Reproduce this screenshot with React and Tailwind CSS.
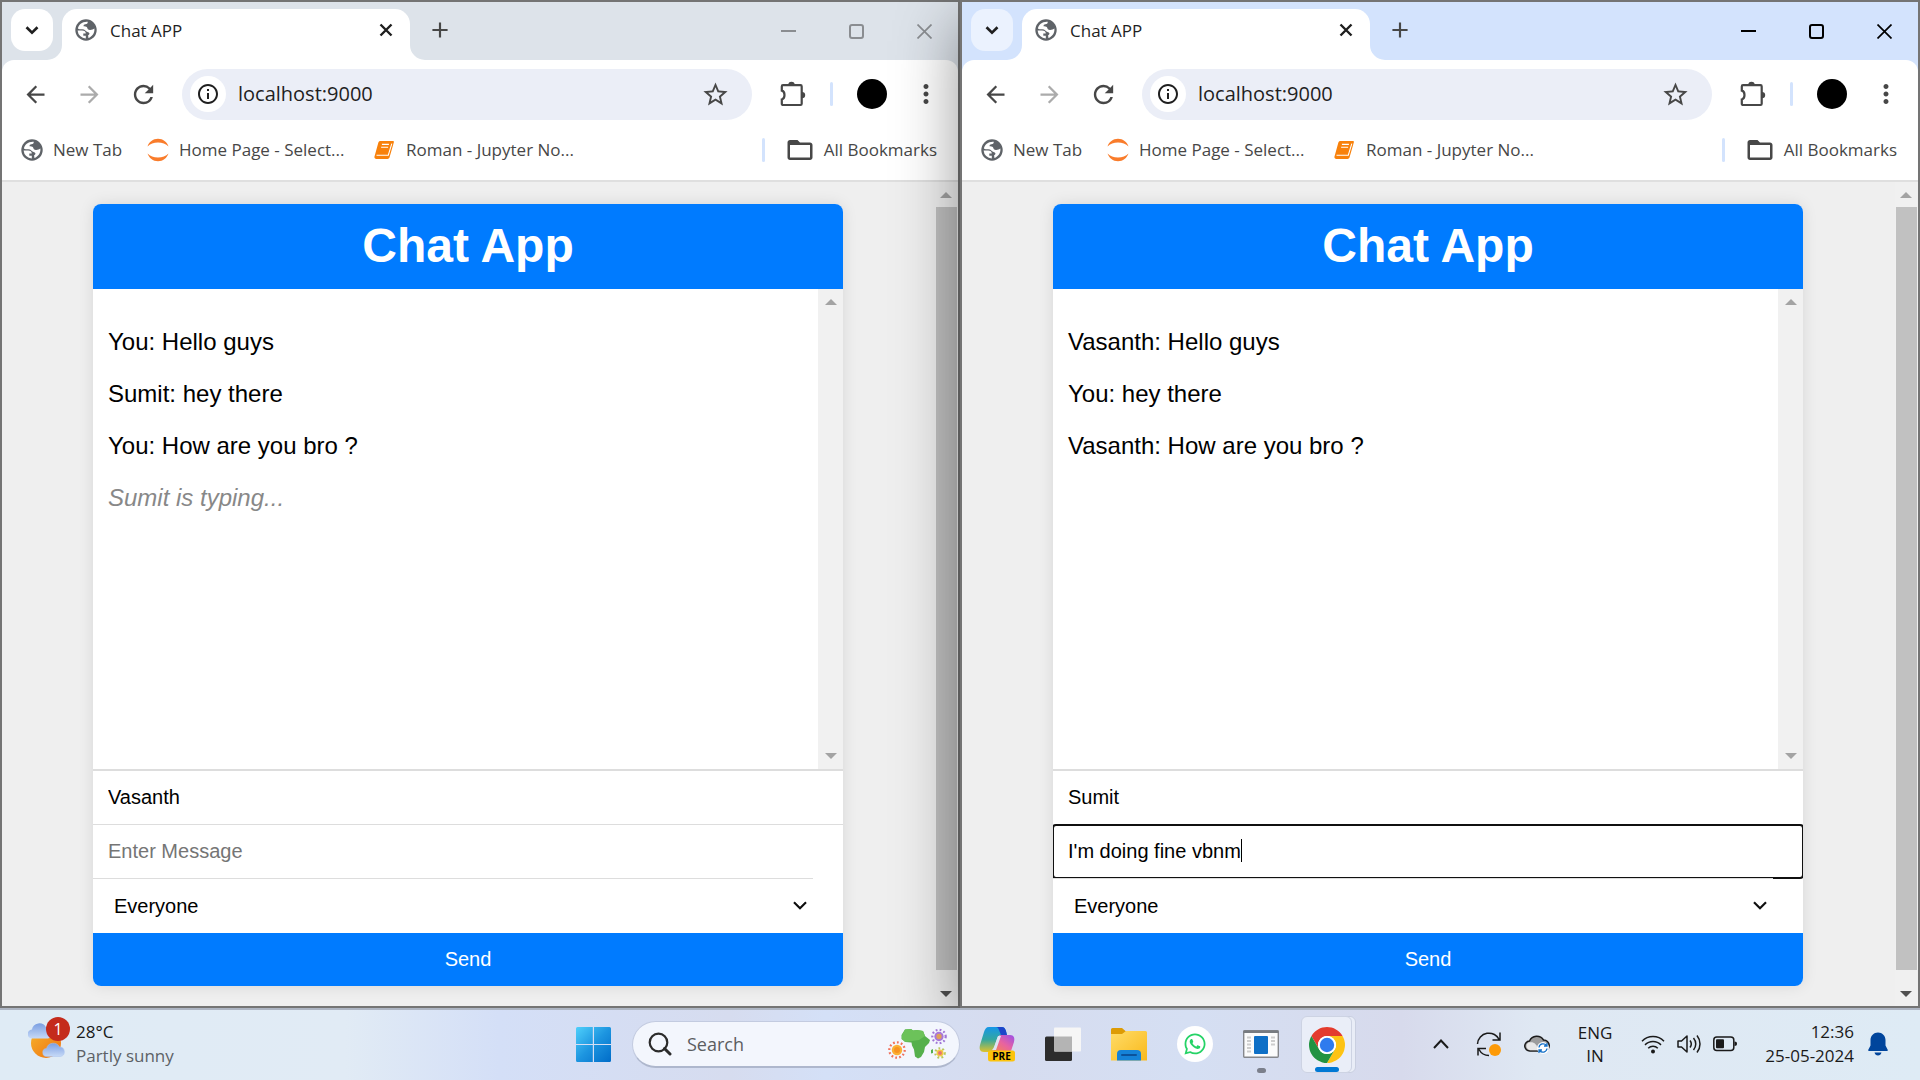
import React from "react";
import {
  MdArrowBack,
  MdArrowForward,
  MdRefresh,
  MdInfoOutline,
  MdStarBorder,
  MdMoreVert,
  MdAdd,
  MdFolderOpen,
} from "react-icons/md";
import { FaWhatsapp } from "react-icons/fa";

const UI_FONT = "font-['Open_Sans','Noto_Sans',sans-serif]";
const PAGE_FONT = "font-['Liberation_Sans',Arial,sans-serif]";

function Globe() {
  return (
    <svg viewBox="0 0 22 22" className="size-[22px] shrink-0" aria-hidden="true">
      <circle cx="11" cy="11" r="10.7" fill="#5f6368" />
      <path d="M2.600 11.500H7c2.500 0 3.800 1 3.800 3H8.300v2.200h2.500v2.700a8.500 8.500 0 0 1-8.200-7.900Z" fill="#fff" />
      <path d="M12.800 2.700c-.1 1.800-1 2.500-2.400 2.500-1.300 0-1.900.8-1.900 2.100 2.200-.2 3.500.5 3.900 1.900.4 1.300 1.200 1.800 2.800 1.700 1.700 0 3.200-.4 4.200-1.300.4 4.500-2.200 8.200-6 9.500l-.3-2.900c1.600-.4 2-2.300 0-2.900-2.400-.8-3.100-3.100-5.900-3.100-1.700 0-3.200-.2-4.300-.8C3.500 5.500 7.500 2.200 12.800 2.700Z" fill="#fff" />
    </svg>
  );
}

function Jupyter() {
  return (
    <svg viewBox="0 0 24 24" className="size-6 shrink-0" aria-hidden="true">
      <path d="M1.500 8.500C3 4 7 .8 12 .8s9 3.200 10.500 7.700C20 5.600 16.200 4.500 12 4.500S4 5.600 1.500 8.500Z" fill="#f97c2b" />
      <path d="M1.500 15.500C3 20 7 23.200 12 23.200s9-3.200 10.500-7.700c-2.500 2.900-6.300 4-10.500 4s-8-1.100-10.500-4Z" fill="#f97c2b" />
    </svg>
  );
}

function Book() {
  return (
    <svg viewBox="0 0 20 20" className="size-5 shrink-0" aria-hidden="true">
      <path d="M6.500 1h12.300c1 0 1.300.7 1 1.600l-4.300 15c-.3.900-1 1.400-2 1.400H2.300C.8 19 .1 17.700.5 16.400L4.300 2.700C4.600 1.600 5.400 1 6.500 1Z" fill="#f8810b" />
      <path d="M7.900 4.400h7M7.100 7.200h7M2.500 15.200h11.800l3.500-11.500" fill="none" stroke="#fff" strokeWidth="1.100" />
    </svg>
  );
}

function Puzzle() {
  return (
    <svg viewBox="0 0 26 26" className="size-[26px]" aria-hidden="true">
      <path d="M3 4.200h17.500a1.200 1.200 0 0 1 1.200 1.200v17.400a1.200 1.200 0 0 1-1.200 1.200H3a1.200 1.200 0 0 1-1.200-1.200v-4.300c3.600-.8 3.600-8.100 0-8.800V5.400A1.200 1.200 0 0 1 3 4.200Z" fill="none" stroke="#474747" strokeWidth="2.200" />
      <path d="M8.300 4a3.200 3.200 0 0 1 6.400 0ZM22 10.900a3.200 3.200 0 0 1 0 6.400Z" fill="#474747" />
    </svg>
  );
}

function TabFoot({ flip }) {
  return (
    <svg viewBox="0 0 15 15" className={flip ? "size-[15px] -scale-x-100 self-end" : "size-[15px] self-end"} aria-hidden="true">
      <path d="M0 15A15 15 0 0 0 15 0V15Z" fill="#fff" />
    </svg>
  );
}

function Triangle({ down, dark }) {
  return (
    <svg
      viewBox="0 0 12 6"
      className={(down ? "rotate-180 " : "") + "h-1.5 w-3 " + (dark ? "text-[#505050]" : "text-[#a3a3a3]")}
      aria-hidden="true"
    >
      <path d="M6 0 12 6H0Z" fill="currentColor" />
    </svg>
  );
}

function TabStrip({ active }) {
  return (
    <div className={"flex h-[58px] pl-[9px] pt-[7px] " + (active ? "bg-[#d3e3fd]" : "bg-[#dde3ea]")}>
      <button
        type="button"
        aria-label="Search tabs"
        className={"flex size-[42px] shrink-0 items-center justify-center rounded-[14px] " + (active ? "bg-[#ebf2fe]" : "bg-white")}
      >
        <svg viewBox="0 0 14 9" className="h-[9px] w-[14px]" aria-hidden="true">
          <path d="m1.500 1.300 5.500 5.400 5.500-5.400" fill="none" stroke="#1f1f1f" strokeWidth="2.600" />
        </svg>
      </button>
      <div className="-ml-1.5 flex">
        <TabFoot />
        <div className="flex w-[348px] items-start rounded-t-[15px] bg-white pl-[13px] pr-[17px]">
          <div className="flex h-[42px] flex-1 items-center gap-[13px]">
            <Globe />
            <span className="pt-0.5 text-[17px] leading-6 text-[#1f1f1f]">Chat APP</span>
            <button type="button" aria-label="Close tab" className="ml-auto">
              <svg viewBox="0 0 14 14" className="size-3.5" aria-hidden="true">
                <path d="m1.500 1.500 11 11m0-11-11 11" stroke="#1f1f1f" strokeWidth="2.400" />
              </svg>
            </button>
          </div>
        </div>
        <TabFoot flip />
      </div>
      <button type="button" aria-label="New tab" className="-ml-1.5 flex size-[42px] items-center justify-center text-[#474747]">
        <MdAdd size={26} />
      </button>
      <div className={"-mt-[7px] ml-auto flex items-stretch " + (active ? "text-black" : "text-[#8a8d91]")}>
        <button type="button" aria-label="Minimize" className="flex w-[68px] items-center justify-center">
          <span className="h-0.5 w-[15px] bg-current" />
        </button>
        <button type="button" aria-label="Maximize" className="flex w-[68px] items-center justify-center">
          <span className="size-[15px] rounded-[3px] border-2 border-current" />
        </button>
        <button type="button" aria-label="Close window" className="flex w-[68px] items-center justify-center">
          <svg viewBox="0 0 15 15" className="size-[15px]" aria-hidden="true">
            <path d="m.5.5 14 14m0-14-14 14" stroke="currentColor" strokeWidth="1.700" />
          </svg>
        </button>
      </div>
    </div>
  );
}

function Toolbar() {
  return (
    <div className="flex h-[68px] items-center rounded-t-xl bg-white text-[#474747]">
      <div className="flex w-[180px] shrink-0 items-center pl-1.5">
        <button type="button" aria-label="Back" className="flex w-[54px] justify-center">
          <MdArrowBack size={27} />
        </button>
        <button type="button" aria-label="Forward" className="flex w-[54px] justify-center text-[#ababab]">
          <MdArrowForward size={27} />
        </button>
        <button type="button" aria-label="Reload" className="flex w-[54px] justify-center">
          <MdRefresh size={29} />
        </button>
      </div>
      <div className="flex h-[51px] min-w-0 flex-1 items-center rounded-full bg-[#ebeef7] pl-2 pr-[22px]">
        <button type="button" aria-label="View site information" className="flex size-9 shrink-0 items-center justify-center rounded-full bg-white text-[#1f1f1f]">
          <MdInfoOutline size={24} />
        </button>
        <input aria-label="Address" defaultValue="localhost:9000" className="ml-3 min-w-0 flex-1 bg-transparent text-xl leading-7 text-[#1f1f1f] outline-none" />
        <button type="button" aria-label="Bookmark this tab">
          <MdStarBorder size={29} />
        </button>
      </div>
      <button type="button" aria-label="Extensions" className="ml-7">
        <Puzzle />
      </button>
      <span className="ml-6 h-6 w-[3px] rounded-full bg-[#d3e3fd]" />
      <button type="button" aria-label="Profile" className="ml-6 size-[30px] rounded-full bg-black" />
      <button type="button" aria-label="Menu" className="ml-6 mr-[17px]">
        <MdMoreVert size={30} />
      </button>
    </div>
  );
}

function BookmarksBar() {
  return (
    <nav aria-label="Bookmarks" className="flex h-[54px] items-center whitespace-nowrap border-b-2 border-[#dfdfdf] bg-white pb-2 pl-[19px] pr-[21px] text-[17px] leading-6 text-[#474747]">
      <a href="#new" className="flex w-[125px] items-center gap-2.5">
        <Globe />
        New Tab
      </a>
      <a href="#home" className="flex w-[228px] items-center gap-[9px]">
        <Jupyter />
        Home Page - Select...
      </a>
      <a href="#roman" className="flex items-center gap-3">
        <Book />
        Roman - Jupyter No...
      </a>
      <span className="ml-auto h-6 w-[3px] rounded-full bg-[#d3e3fd]" />
      <button type="button" className="ml-5 flex items-center gap-[9px]">
        <MdFolderOpen size={30} />
        All Bookmarks
      </button>
    </nav>
  );
}

function ChatCard({ name, message, lines, typing }) {
  return (
    <main className="mb-5 mt-[22px] flex w-full max-w-[750px] flex-col overflow-hidden rounded-lg bg-white text-xl leading-6 text-black shadow-[0_0_15px_rgba(0,0,0,0.1)]">
      <h1 className="bg-[#007bff] pb-4 pt-3.5 text-center text-5xl font-bold leading-[55px] text-white">Chat App</h1>
      <div className="flex min-h-0 flex-1 border-b-2 border-[#ddd]">
        <div className="flex-1 space-y-6 px-[15px] pt-[39px] text-2xl leading-7">
          {lines.map((line) => (
            <p key={line}>{line}</p>
          ))}
          {typing && <p className="italic text-[#888]">{typing}</p>}
        </div>
        <div className="flex w-[25px] flex-col items-center justify-between bg-[#f1f1f1] py-2.5">
          <Triangle />
          <Triangle down />
        </div>
      </div>
      <form className="flex flex-col" onSubmit={(e) => e.preventDefault()}>
        <input aria-label="Name" defaultValue={name} className="h-[54px] border-b border-[#ddd] px-[15px] outline-none" />
        <div className="relative flex h-[53px]">
          <input
            aria-label="Message"
            defaultValue={message}
            placeholder="Enter Message"
            className={
              "w-full px-[15px] pb-0.5 placeholder:text-[#757575] " +
              (message ? "rounded-[3px] outline-2 -outline-offset-1 outline-[#101010]" : "outline-none")
            }
          />
          {message && <span className="absolute left-[188px] top-3.5 h-[23px] w-px bg-black" />}
        </div>
        <div className="relative mr-[30px]">
          <select aria-label="Recipient" className="block h-[55px] w-full appearance-none border-t border-[#ddd] bg-white pl-[21px] outline-none">
            <option>Everyone</option>
          </select>
          <svg viewBox="0 0 14 9" className="pointer-events-none absolute right-1.5 top-[23px] h-[9px] w-[14px]" aria-hidden="true">
            <path d="m1 1.200 6 6 6-6" fill="none" stroke="#101010" strokeWidth="2.200" />
          </svg>
        </div>
        <button type="submit" className="h-[53px] bg-[#007bff] pb-0.5 text-white">Send</button>
      </form>
    </main>
  );
}

function BrowserWindow({ active, chat }) {
  return (
    <section
      className={
        "flex min-w-0 flex-1 flex-col border-2 border-[#747474] " +
        (active ? "relative bg-[#d3e3fd] shadow-[0_20px_60px_rgba(0,0,0,0.42)]" : "bg-[#dde3ea]")
      }
    >
      <header className={UI_FONT}>
        <TabStrip active={active} />
        <Toolbar />
        <BookmarksBar />
      </header>
      <div className={"flex min-h-0 flex-1 bg-[#efefef] " + PAGE_FONT}>
        <div className="flex flex-1 justify-center pl-5 pr-[21px]">
          <ChatCard {...chat} />
        </div>
        <div className="flex w-[23px] flex-col items-center gap-[9px] bg-[#f0f0f0] pb-[9px] pr-px pt-2.5">
          <Triangle />
          <span className="w-[21px] flex-1 bg-[#c1c1c1]" />
          <span className="pt-3">
            <Triangle down dark />
          </span>
        </div>
      </div>
    </section>
  );
}

function Weather() {
  return (
    <svg viewBox="0 0 38 40" className="h-10 w-[38px]" aria-hidden="true">
      <defs>
        <linearGradient id="sun" x1="0" y1="0" x2="1" y2="1">
          <stop offset="0" stopColor="#f7b52c" />
          <stop offset="1" stopColor="#ee6f10" />
        </linearGradient>
        <linearGradient id="cloud" x1="0" y1="0" x2="0" y2="1">
          <stop offset="0" stopColor="#7b9fe2" />
          <stop offset="1" stopColor="#c6d9f7" />
        </linearGradient>
      </defs>
      <circle cx="18" cy="25" r="15" fill="url(#sun)" />
      <path d="M4.500 20.500a4.500 4.500 0 0 1-.6-9A7.500 7.500 0 0 1 18 9.500a5.500 5.500 0 0 1 2 11Z" fill="url(#cloud)" />
      <path d="M19 38.500a4 4 0 0 1-.5-8 7 7 0 0 1 13-1.500 4.800 4.800 0 0 1 1 9.500Z" fill="url(#cloud)" stroke="#a9c2ee" strokeWidth=".5" />
    </svg>
  );
}

function StartLogo() {
  return (
    <svg viewBox="0 0 35 35" className="size-[35px]" aria-hidden="true">
      <defs>
        <linearGradient id="start" gradientUnits="userSpaceOnUse" x1="0" y1="0" x2="35" y2="35">
          <stop offset="0" stopColor="#4fd0fb" />
          <stop offset=".5" stopColor="#1d95e0" />
          <stop offset="1" stopColor="#006cc8" />
        </linearGradient>
      </defs>
      <path d="M1.500 0H16.800V17H0V1.500A1.500 1.500 0 0 1 1.500 0ZM18 0h15.500A1.500 1.500 0 0 1 35 1.500V17H18ZM0 18h16.800v17H1.500A1.500 1.500 0 0 1 0 33.500ZM18 18h17v15.500a1.500 1.500 0 0 1-1.500 1.500H18Z" fill="url(#start)" />
    </svg>
  );
}

function Burst({ cx, cy, r, ring, core, heart }) {
  return (
    <g>
      <circle cx={cx} cy={cy} r={r - 1.3} fill="none" stroke={ring} strokeWidth="2.200" strokeDasharray="1.800 2.200" />
      <circle cx={cx} cy={cy} r={r * 0.58} fill={core} />
      <circle cx={cx} cy={cy} r={r * 0.33} fill={heart} />
    </g>
  );
}

function SearchArt() {
  return (
    <svg viewBox="0 0 60 32" className="h-8 w-[60px]" aria-hidden="true">
      <path d="M17 1.500 23 1l2 1.500 4-.5 6 1 2 5 5 4-1 3-4 4-1 5-3 5-3 1.500-3-2-1-7-2-4-.5-3-6-.5-4-3V7Z" fill="#55b04c" />
      <path d="M17 1.500 23 1l2 1.500 4-.5 6 1 2 5-6 4-14 2-3-3V7Z" fill="#6cc25a" />
      <path d="M43 22l2-1v4l-2 .5Z" fill="#55b04c" />
      <Burst cx={9} cy={22} r={9} ring="#f0705a" core="#fbb034" heart="#f79320" />
      <Burst cx={51} cy={8.500} r={8} ring="#a076d6" core="#a877d8" heart="#e0a25a" />
      <Burst cx={52} cy={25} r={6} ring="#b9c85a" core="#f5c842" heart="#e57373" />
    </svg>
  );
}

function Copilot() {
  return (
    <svg viewBox="0 0 36 36" className="size-9" aria-hidden="true">
      <defs>
        <linearGradient id="cpa" x1="0" y1="0" x2="0" y2="1">
          <stop offset="0" stopColor="#1596e8" />
          <stop offset=".5" stopColor="#33a7a0" />
          <stop offset="1" stopColor="#e0c32c" />
        </linearGradient>
        <linearGradient id="cpb" x1="1" y1="0" x2="0" y2="1">
          <stop offset="0" stopColor="#9a4fe8" />
          <stop offset=".5" stopColor="#e863a0" />
          <stop offset="1" stopColor="#f7884a" />
        </linearGradient>
      </defs>
      <path d="M10 1h13c3 0 4 3 5 8h-6c-2 0-3 1-4 4l-3 9c-1 3-2 4-5 4H5c-4 0-5-3-4-7l4-13c1-3 2-5 5-5Z" fill="url(#cpa)" />
      <path d="M17 1h6c3 0 4 3 5 8h-6l-2-5c-.6-2-1.500-3-3-3Z" fill="#1d45c9" />
      <path d="M22 9h9c4 0 5 3 4 7l-3 9H12c2 0 3-1 4-4l3-9c.6-2 1.500-3 3-3Z" fill="url(#cpb)" />
      <path d="M19 10h3l-5 14h-4c1-1 1.500-2 2-3Z" fill="#dfe3f3" />
      <rect x="9" y="24.500" width="27" height="11" rx="2.500" fill="#fcc30b" />
      <text x="22.500" y="33.500" textAnchor="middle" fontFamily="Open Sans, sans-serif" fontWeight="700" fontSize="10" fill="#000">PRE</text>
    </svg>
  );
}

function TaskView() {
  return (
    <svg viewBox="0 0 36 36" className="size-9" aria-hidden="true">
      <rect x="0" y="10.500" width="27" height="24.500" rx="1.500" fill="#2d2d2d" />
      <rect x="9" y="1.500" width="27" height="24" rx="1" fill="#f6f6f6" />
      <path d="M9 10.500h18v15H10a1 1 0 0 1-1-1Z" fill="#b4b4b4" />
    </svg>
  );
}

function Folder() {
  return (
    <svg viewBox="0 0 36 36" className="size-9" aria-hidden="true">
      <defs>
        <linearGradient id="fold" x1="0" y1="0" x2="1" y2="1">
          <stop offset="0" stopColor="#ffdc69" />
          <stop offset="1" stopColor="#f9b91a" />
        </linearGradient>
      </defs>
      <path d="M0 3.500A1.500 1.500 0 0 1 1.500 2H11l4 3.500V12H0Z" fill="#dd9b05" />
      <path d="M0 8h11l4-3h19.500A1.500 1.500 0 0 1 36 6.500V34.500H0Z" fill="url(#fold)" />
      <path d="M6 34.500V28a4 4 0 0 1 4-4h16a4 4 0 0 1 4 4v6.500Z" fill="#1583d8" />
      <rect x="10" y="28" width="16" height="2" rx="1" fill="#0b529b" />
    </svg>
  );
}

function PreviewApp() {
  return (
    <svg viewBox="0 0 36 36" className="size-9" aria-hidden="true">
      <rect x=".7" y="4.700" width="34.600" height="26.600" rx="1" fill="#fbfbfb" stroke="#85878c" strokeWidth="1.400" />
      <path d="M.5 4.500h35V7H.5Z" fill="#777b80" />
      <rect x="11" y="10" width="14" height="18" rx="1" fill="#0e6fc6" />
      <path d="M4 11.500h4M4 15h4M4 18.500h4M4 22h4M4 25.500h4M28 11.500h4M28 15h4M28 18.500h4" stroke="#cdcdcd" strokeWidth="1.800" />
    </svg>
  );
}

function Chrome() {
  return (
    <svg viewBox="0 0 48 48" className="size-9" aria-hidden="true">
      <circle cx="24" cy="24" r="24" fill="#fff" />
      <path d="M3.220 12A24 24 0 0 1 44.780 12H24A12 12 0 0 0 13.600 30Z" fill="#e33b2e" />
      <path d="M44.780 12A24 24 0 0 1 24 48L34.400 30A12 12 0 0 0 24 12Z" fill="#fdc314" />
      <path d="M24 48A24 24 0 0 1 3.220 12L13.600 30A12 12 0 0 0 34.400 30Z" fill="#229342" />
      <circle cx="24" cy="24" r="12" fill="#fff" />
      <circle cx="24" cy="24" r="9.600" fill="#2f7bee" />
    </svg>
  );
}

function TaskButton({ label, running, children }) {
  return (
    <button type="button" aria-label={label} className="relative flex h-[68px] w-[66px] items-center justify-center">
      {children}
      {running && <span className="absolute bottom-[5px] h-[5px] w-[9px] rounded-full bg-[#7b7f8b]" />}
    </button>
  );
}

function Tray() {
  return (
    <div className="flex items-center justify-end pr-8 text-[#1a1a1a]">
      <button type="button" aria-label="Show hidden icons" className="flex w-12 justify-center">
        <svg viewBox="0 0 16 10" className="h-2.5 w-4" aria-hidden="true">
          <path d="m1 9 7-7.500L15 9" fill="none" stroke="currentColor" strokeWidth="2" />
        </svg>
      </button>
      <button type="button" aria-label="Update available" className="flex w-12 justify-center">
        <svg viewBox="0 0 26 26" className="size-[26px]" aria-hidden="true">
          <path d="M1.500 13A11.500 11.500 0 0 1 23.500 9M24 1.500V9h-7.500M2 24.500v-7h8M3 18.500a11.500 11.500 0 0 0 10 6" fill="none" stroke="currentColor" strokeWidth="1.500" />
          <circle cx="19" cy="19" r="6" fill="#fd9a08" />
        </svg>
      </button>
      <button type="button" aria-label="OneDrive" className="flex w-12 justify-center">
        <svg viewBox="0 0 26 20" className="h-5 w-[26px]" aria-hidden="true">
          <path d="M6 17a5 5 0 0 1-.5-10A8 8 0 0 1 19.500 6 5.500 5.500 0 0 1 20 17Z" fill="#9c9c9c" stroke="#1a1a1a" strokeWidth="1.500" />
          <path d="M6 16.200a4.200 4.200 0 0 1-2-7.500c5-1.500 9 .5 10 7.500Z" fill="#e8e8e8" />
          <circle cx="19" cy="14" r="6" fill="#fff" />
          <path d="M15 13.500a4.200 4.200 0 0 1 7.500-2m.5 3a4.200 4.200 0 0 1-7.500 2M23 9v3h-3M15 19v-3h3" fill="none" stroke="#1470c8" strokeWidth="1.300" />
        </svg>
      </button>
      <button type="button" aria-label="Input language" className="flex w-[68px] flex-col items-center text-[17px] leading-[23px]">
        <span>ENG</span>
        <span>IN</span>
      </button>
      <button type="button" aria-label="Network, volume and battery" className="flex items-center gap-3 pl-3">
        <svg viewBox="0 0 24 20" className="h-5 w-6" aria-hidden="true">
          <path d="M1 7.200a15.500 15.500 0 0 1 22 0M4 10.900a11.300 11.300 0 0 1 16 0M7.200 14.300a6.800 6.800 0 0 1 9.600 0" fill="none" stroke="currentColor" strokeWidth="1.500" />
          <circle cx="12" cy="17.500" r="2" fill="currentColor" />
        </svg>
        <svg viewBox="0 0 24 20" className="h-5 w-6" aria-hidden="true">
          <path d="M1 7h3.500L10 2v16l-5.500-5H1ZM13 6.500c1.500 2 1.500 5 0 7M16.500 4c3 3.500 3 8.500 0 12M20 1.500c4 5 4 12 0 17" fill="none" stroke="currentColor" strokeWidth="1.500" strokeLinejoin="round" />
        </svg>
        <svg viewBox="0 0 24 16" className="h-4 w-6" aria-hidden="true">
          <rect x=".8" y="1" width="20" height="13.500" rx="3" fill="none" stroke="currentColor" strokeWidth="1.500" />
          <rect x="3" y="3.200" width="8" height="9" rx="1" fill="currentColor" />
          <path d="M21.500 5.500c1.600 0 2.500.8 2.500 2.300s-.9 2.200-2.500 2.200Z" fill="currentColor" />
        </svg>
      </button>
      <button type="button" aria-label="Clock" className="ml-[25px] flex w-[92px] flex-col items-end text-[17px] leading-6">
        <span>12:36</span>
        <span>25-05-2024</span>
      </button>
      <button type="button" aria-label="Notifications" className="ml-3.5">
        <svg viewBox="0 0 20 24" className="h-6 w-5" aria-hidden="true">
          <path d="M10 .5c4.200 0 7.500 3.200 7.500 7.500v5.500l2.200 4.300c.4.800 0 1.200-.7 1.200H1c-.7 0-1.100-.4-.7-1.200l2.200-4.300V8C2.500 3.700 5.800.5 10 .5ZM6.500 20.500h7C13 22.500 11.800 23.500 10 23.500s-3-1-3.500-3Z" fill="#00459c" />
        </svg>
      </button>
    </div>
  );
}

function Taskbar() {
  return (
    <footer
      className={
        "relative z-10 grid h-[72px] grid-cols-[1fr_auto_1fr] items-center border-t-2 border-[#adb5c3] bg-[linear-gradient(90deg,#dfebf5_0%,#e1ebf5_18%,#d4dff7_26%,#d6dcef_38%,#d4e0f7_43%,#d6dcef_52%,#d5dff3_62%,#d7daec_73%,#dfe8f3_80%,#deebf5_100%)] pb-0.5 " +
        UI_FONT
      }
    >
      <button type="button" className="flex items-center pl-7 text-left">
        <span className="relative -mt-3">
          <Weather />
          <span className="absolute -top-px left-[18px] flex size-6 items-center justify-center rounded-full bg-[#c42b1c] text-base leading-6 text-white">1</span>
        </span>
        <span className="ml-2.5 flex flex-col text-[17px] leading-6">
          <span className="text-[#1a1a1a]">28°C</span>
          <span className="text-[#5d6166]">Partly sunny</span>
        </span>
      </button>
      <div className="flex items-center">
        <TaskButton label="Start">
          <StartLogo />
        </TaskButton>
        <div className="ml-1.5 mr-1 flex h-[47px] w-[328px] items-center rounded-full border border-b-2 border-[#c3cbe0] border-b-[#aeb7cd] bg-[#f3f6fd] pl-[15px] pr-[11px]">
          <svg viewBox="0 0 24 24" className="size-6 shrink-0" aria-hidden="true">
            <circle cx="10.500" cy="10.500" r="8.800" fill="none" stroke="#2b2b2b" strokeWidth="2.200" />
            <path d="m16.500 16.500 5.500 5.500" stroke="#2b2b2b" strokeWidth="3" strokeLinecap="round" />
          </svg>
          <input aria-label="Search Windows" placeholder="Search" className="ml-[15px] min-w-0 flex-1 bg-transparent text-lg leading-6 outline-none placeholder:text-[#5b5d61]" />
          <SearchArt />
        </div>
        <TaskButton label="Copilot">
          <Copilot />
        </TaskButton>
        <TaskButton label="Task view">
          <TaskView />
        </TaskButton>
        <TaskButton label="File Explorer">
          <Folder />
        </TaskButton>
        <TaskButton label="WhatsApp">
          <span className="flex size-9 items-center justify-center rounded-full bg-white">
            <FaWhatsapp size={24} color="#25d366" />
          </span>
        </TaskButton>
        <TaskButton label="Preview" running>
          <PreviewApp />
        </TaskButton>
        <TaskButton label="Google Chrome">
          <span className="absolute left-3.5 top-1.5 h-[57px] w-12 rounded-md border border-[#c9cfe0] bg-[#e9edf7]" />
          <span className="absolute left-[7px] top-1.5 flex h-[57px] w-[51px] items-center justify-center rounded-md border border-[#cdd3e3] bg-[#eaeef8]">
            <Chrome />
            <span className="absolute bottom-0 h-[5px] w-6 rounded-full bg-[#0078d4]" />
          </span>
        </TaskButton>
      </div>
      <Tray />
    </footer>
  );
}

const LEFT = {
  name: "Vasanth",
  message: "",
  lines: ["You: Hello guys", "Sumit: hey there", "You: How are you bro ?"],
  typing: "Sumit is typing...",
};

const RIGHT = {
  name: "Sumit",
  message: "I'm doing fine vbnm",
  lines: ["Vasanth: Hello guys", "You: hey there", "Vasanth: How are you bro ?"],
};

export default function App() {
  return (
    <div className="flex h-screen flex-col overflow-hidden">
      <div className="flex min-h-0 flex-1">
        <BrowserWindow chat={LEFT} />
        <BrowserWindow active chat={RIGHT} />
      </div>
      <Taskbar />
    </div>
  );
}
